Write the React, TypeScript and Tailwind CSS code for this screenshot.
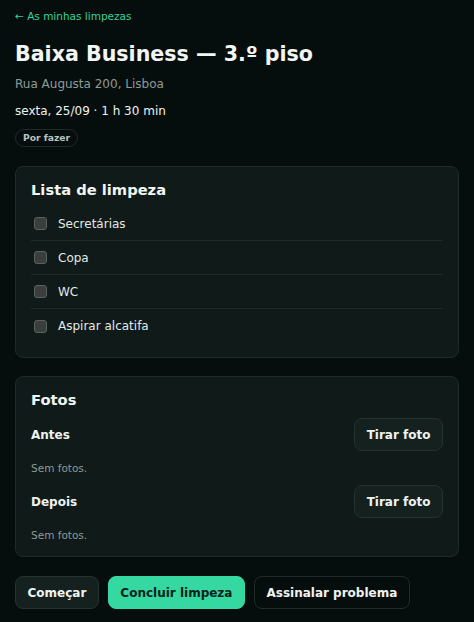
const checklist = ["Secretárias", "Copa", "WC", "Aspirar alcatifa"];

function PhotoGroup({ label, first }: { label: string; first?: boolean }) {
  return (
    <div className={first ? "mt-[9px]" : "mt-[10px]"}>
      <div className="flex items-center justify-between">
        <h3 className="text-[12px] font-bold text-[#eef3f1]">{label}</h3>
        <button className="h-[33px] px-[11.5px] rounded-lg border border-[#25322f] bg-[#15211e] text-[12px] font-bold text-[#eef3f1]">
          Tirar foto
        </button>
      </div>
      <p className="mt-[10px] text-[10.5px] leading-[14px] text-[#8d9996]">Sem fotos.</p>
    </div>
  );
}

export default function App() {
  return (
    <div
      className="min-h-screen bg-[#060e0d] text-[#eef3f1] px-[15px] pt-[9px] pb-6"
      style={{ fontFamily: '"DejaVu Sans", Verdana, sans-serif' }}
    >
      <a href="#" className="block text-[10.5px] leading-[14px] text-[#34d399]">
        ← As minhas limpezas
      </a>

      <h1 className="mt-[18px] text-[20.6px] leading-[26px] font-bold text-[#f2f6f4]">
        Baixa Business — 3.º piso
      </h1>
      <p className="mt-[9px] text-[12px] leading-[16px] text-[#8f9b98]">Rua Augusta 200, Lisboa</p>
      <p className="mt-[11px] text-[12px] leading-[16px] text-[#eef3f1]">sexta, 25/09 · 1 h 30 min</p>
      <div className="mt-[10px] flex">
        <span className="flex h-[18px] items-center rounded-full border border-[#1f2b28] px-[7px] text-[9.2px] font-bold text-[#b9c3c0]">
          Por fazer
        </span>
      </div>

      <section className="mt-[19px] rounded-lg border border-[#1f2b28] bg-[#101a18] px-[15px] pt-[14px] pb-[14px]">
        <h2 className="text-[14.7px] leading-[18px] font-bold text-[#f2f6f4]">Lista de limpeza</h2>
        <ul className="mt-[8px]">
          {checklist.map((item, i) => (
            <li
              key={item}
              className={`flex items-center gap-[11px] h-[34px] ${i < checklist.length - 1 ? "border-b border-[#1f2b28]" : ""}`}
            >
              <span className="ml-[3px] w-[13px] h-[13px] rounded-[3px] border border-[#5a615f] bg-[#3a3e3d]" />
              <span className="text-[12px] text-[#e3e9e7]">{item}</span>
            </li>
          ))}
        </ul>
      </section>

      <section className="mt-[18px] rounded-lg border border-[#1f2b28] bg-[#101a18] px-[15px] pt-[14px] pb-[14px]">
        <h2 className="text-[14.7px] leading-[18px] font-bold text-[#f2f6f4]">Fotos</h2>
        <PhotoGroup label="Antes" first />
        <PhotoGroup label="Depois" />
      </section>

      <div className="mt-[19px] flex gap-[9px]">
        <button className="h-[33px] px-[11.5px] rounded-lg border border-[#25322f] bg-[#15211e] text-[12px] font-bold text-[#eef3f1]">
          Começar
        </button>
        <button className="h-[33px] px-[11.5px] rounded-lg border border-[#34d8a0] bg-[#34d8a0] text-[12px] font-bold text-[#06231a]">
          Concluir limpeza
        </button>
        <button className="h-[33px] px-[11.5px] rounded-lg border border-[#1f2b28] bg-transparent text-[12px] font-bold text-[#eef3f1]">
          Assinalar problema
        </button>
      </div>
    </div>
  );
}
